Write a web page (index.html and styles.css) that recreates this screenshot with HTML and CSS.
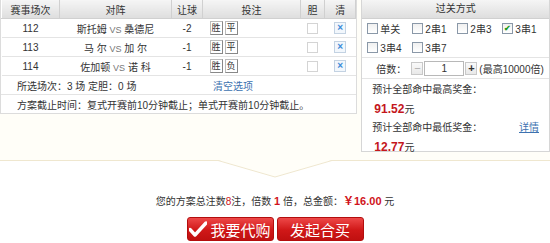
FILE: index.html
```html
<!DOCTYPE html>
<html lang="zh-CN">
<head>
<meta charset="UTF-8">
<title>投注确认</title>
<link rel="stylesheet" href="styles.css">
</head>
<body>
<div class="page">
  <div class="board">
    <div class="picks">
      <table class="match-table">
        <thead>
          <tr>
            <th class="c-no">赛事场次</th>
            <th class="c-team">对阵</th>
            <th class="c-rq">让球</th>
            <th class="c-bet">投注</th>
            <th class="c-dan">胆</th>
            <th class="c-clr">清</th>
          </tr>
        </thead>
        <tbody>
          <tr>
            <td>112</td>
            <td>斯托姆 <span class="vs">VS</span> 桑德尼</td>
            <td>-2</td>
            <td class="bets"><span class="opt">胜</span><span class="opt">平</span></td>
            <td><span class="box off"></span></td>
            <td><span class="del">×</span></td>
          </tr>
          <tr>
            <td>113</td>
            <td>马&nbsp;尔 <span class="vs">VS</span> 加&nbsp;尔</td>
            <td>-1</td>
            <td class="bets"><span class="opt">胜</span><span class="opt">平</span></td>
            <td><span class="box off"></span></td>
            <td><span class="del">×</span></td>
          </tr>
          <tr>
            <td>114</td>
            <td>佐加顿 <span class="vs">VS</span> 诺&nbsp;科</td>
            <td>-1</td>
            <td class="bets"><span class="opt">胜</span><span class="opt">负</span></td>
            <td><span class="box off"></span></td>
            <td><span class="del">×</span></td>
          </tr>
        </tbody>
      </table>
      <div class="info-row">
        <span class="sel">所选场次：3 场 定胆：0 场</span>
        <a class="link" href="#">清空选项</a>
      </div>
      <div class="info-row">方案截止时间：复式开赛前10分钟截止；单式开赛前10分钟截止。</div>
    </div>

    <div class="pass">
      <div class="pass-head">过关方式</div>
      <div class="pass-types">
        <label class="type"><span class="box"></span>单关</label>
        <label class="type"><span class="box"></span>2串1</label>
        <label class="type"><span class="box"></span>2串3</label>
        <label class="type"><span class="box on">✔</span>3串1</label>
        <label class="type"><span class="box"></span>3串4</label>
        <label class="type"><span class="box"></span>3串7</label>
      </div>
      <div class="multi">
        <span class="multi-label">倍数：</span>
        <span class="step minus">−</span>
        <span class="num">1</span>
        <span class="step plus">+</span>
        <span class="max">(最高10000倍)</span>
      </div>
      <div class="prize">
        <p>预计全部命中最高奖金：</p>
        <p class="money"><b>91.52</b>元</p>
        <p class="prize-line">预计全部命中最低奖金：<a class="link detail" href="#">详情</a></p>
        <p class="money"><b>12.77</b>元</p>
      </div>
    </div>
  </div>

  <svg class="notch" width="114" height="19" viewBox="0 0 114 19">
    <polygon points="0,0 57,17 114,0" fill="#fffef8"/>
    <polyline points="0,0.5 57,17 114,0.5" fill="none" stroke="#efe7cf" stroke-width="1"/>
  </svg>

  <p class="total">您的方案总注数<span class="red">8</span>注，倍数 <b class="red">1</b> 倍，总金额：<b class="red">￥16.00</b> 元</p>

  <div class="actions">
    <a class="btn" href="#">
      <svg class="tick" width="18" height="16" viewBox="0 0 18 16"><path d="M1 8.5 L6 14 L17 2" fill="none" stroke="#fff" stroke-width="3.4" stroke-linecap="round" stroke-linejoin="round"/></svg>我要代购
    </a>
    <a class="btn" href="#">发起合买</a>
  </div>
</div>
</body>
</html>
```

FILE: styles.css
```css
body {
  margin: 0;
  padding: 0;
  background-color: #fff;
  font-family: "Liberation Sans", "Noto Sans CJK SC", sans-serif;
  font-size: 10px;
  color: #333;
}
p {
  margin: 0;
}
a {
  text-decoration: none;
}
.page {
  position: relative;
  width: 550px;
}
.board {
  display: flex;
  align-items: flex-start;
  gap: 4px;
  height: 160px;
  background-color: #fffef8;
  border-bottom: 1px solid #efe7cf;
}
.picks {
  width: 356px;
  background-color: #fff;
  border: 1px solid #dcdcdc;
  border-top: none;
}
.match-table {
  width: 100%;
  border-collapse: collapse;
}
.match-table th {
  height: 18px;
  padding: 0;
  font-weight: normal;
  background: linear-gradient(#f5f5f5, #dedede);
  border-left: 1px solid #fff;
  border-right: 1px solid #d0d0d0;
  border-bottom: 1px solid #d0d0d0;
}
.match-table td {
  height: 18px;
  padding: 0;
  text-align: center;
  border-bottom: 1px solid #e4e4e4;
}
.c-no { width: 57px; }
.c-team { width: 111px; }
.c-rq { width: 30px; }
.c-bet { width: 97px; }
.c-dan { width: 23px; }
.vs {
  color: #777;
  font-size: 9px;
}
.match-table td.bets {
  text-align: left;
  padding-left: 7px;
}
.opt {
  display: inline-block;
  width: 11px;
  height: 12px;
  line-height: 12px;
  margin-right: 2px;
  text-align: center;
  font-size: 9px;
  background-color: #fff;
  border: 1px solid #bbb;
  border-right-color: #888;
  border-bottom-color: #888;
  vertical-align: middle;
}
.box {
  display: inline-block;
  width: 9px;
  height: 9px;
  line-height: 9px;
  border: 1px solid #8a98a8;
  background: linear-gradient(#f0f0f0, #fff);
  vertical-align: middle;
  text-align: center;
  font-size: 8px;
}
.box.off {
  border-color: #d4d4d4;
  background: #fff;
}
.box.on {
  color: #1a9a1a;
  font-weight: bold;
}
.del {
  display: inline-block;
  width: 10px;
  height: 10px;
  line-height: 9px;
  font-size: 10px;
  font-weight: bold;
  color: #3b8ad8;
  background-color: #f2f7fc;
  border: 1px solid #c3d2e2;
  vertical-align: middle;
}
.info-row {
  display: flex;
  align-items: center;
  height: 18px;
  padding-left: 16px;
  border-bottom: 1px solid #e4e4e4;
}
.info-row:last-child {
  border-bottom: none;
}
.sel {
  width: 196px;
}
.link {
  color: #3d72b0;
}
.pass {
  width: 187px;
  height: 151px;
  background-color: #fff;
  border: 1px solid #d6d6d6;
  border-top: none;
}
.pass-head {
  height: 18px;
  line-height: 18px;
  text-align: center;
  background: linear-gradient(#f5f5f5, #dedede);
  border-bottom: 1px solid #d0d0d0;
}
.pass-types {
  display: flex;
  flex-wrap: wrap;
  padding: 0 0 0 5px;
  border-bottom: 1px solid #e4e4e4;
}
.type {
  display: flex;
  align-items: center;
  gap: 2px;
  width: 45px;
  height: 19px;
}
.multi {
  display: flex;
  align-items: center;
  height: 20px;
  padding-left: 14px;
  border-bottom: 1px solid #e4e4e4;
}
.multi-label {
  width: 35px;
}
.step {
  display: inline-block;
  width: 10px;
  height: 11px;
  line-height: 10px;
  text-align: center;
  font-size: 11px;
  border: 1px solid #c8c8c8;
  background: linear-gradient(#fafafa, #e8e8e8);
}
.minus {
  color: #aaa;
}
.plus {
  color: #333;
  font-weight: bold;
}
.num {
  display: inline-block;
  width: 38px;
  height: 13px;
  line-height: 13px;
  margin: 0 1px;
  text-align: center;
  border: 1px solid #b8b8b8;
}
.max {
  margin-left: 2px;
}
.prize {
  padding: 2px 0 0 10px;
}
.prize p {
  line-height: 18px;
  height: 18px;
}
.prize p.money {
  height: 20px;
  line-height: 20px;
  padding-left: 2px;
}
.money b {
  color: #c4161c;
  font-size: 12px;
}
.prize-line {
  display: flex;
  justify-content: space-between;
  padding-right: 10px;
}
.detail {
  text-decoration: underline;
}
.notch {
  position: absolute;
  top: 160px;
  left: 218px;
}
.total {
  margin-top: 33px;
  line-height: 14px;
  text-align: center;
}
.red {
  color: #d0131b;
}
b.red {
  font-size: 11px;
}
.actions {
  display: flex;
  justify-content: center;
  gap: 3px;
  margin-top: 8px;
}
.btn {
  display: flex;
  align-items: center;
  justify-content: center;
  gap: 3px;
  width: 85px;
  height: 22px;
  color: #fff;
  font-family: "Noto Sans CJK SC", sans-serif;
  font-size: 15px;
  background: linear-gradient(#ee4848, #d01818 55%, #c01010);
  border: 1px solid #b30d0d;
  border-radius: 3px;
}
```
